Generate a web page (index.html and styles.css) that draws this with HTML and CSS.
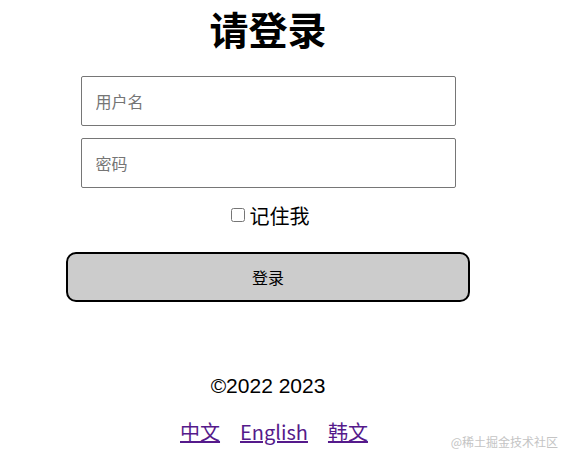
FILE: index.html
```html
<!DOCTYPE html>
<html lang="zh">

<head>
    <meta charset="UTF-8">
    <title>请登录</title>
    <link rel="stylesheet" href="styles.css">
</head>

<body>
    <div class="wrapper">
        <h1 class="title">请登录</h1>

        <form class="login-form">
            <input class="field" type="text" placeholder="用户名">
            <input class="field" type="password" placeholder="密码">
            <label class="remember"><input type="checkbox" class="check">记住我</label>
            <button type="button" class="submit">登录</button>
        </form>

        <div class="copyright">©2022 2023</div>

        <div class="langs">
            <a href="#">中文</a>
            <a href="#">English</a>
            <a href="#">韩文</a>
        </div>
    </div>

    <div class="watermark">@稀土掘金技术社区</div>
</body>

</html>
```

FILE: styles.css
```css
body {
    margin: 0;
    font-family: "Noto Sans CJK SC", "Liberation Sans", sans-serif;
    color: #000;
    background: #fff;
}

.wrapper {
    width: 404px;
    margin-left: 66px;
}

.title {
    margin: 0;
    font-size: 39px;
    line-height: normal;
    font-weight: 700;
    text-align: center;
}

.login-form {
    display: flex;
    flex-direction: column;
    align-items: center;
    margin-top: 20px;
}

.field {
    box-sizing: border-box;
    width: 375px;
    height: 50px;
    margin-bottom: 12px;
    padding: 0 14px;
    border: 1px solid #767676;
    border-radius: 2px;
    font-family: inherit;
    font-size: 16px;
}

.field::placeholder {
    color: #757575;
}

.remember {
    display: flex;
    align-items: center;
    height: 30px;
    margin-left: 4px;
    font-size: 20px;
}

.check {
    width: 14px;
    height: 14px;
    margin: 0 5px 0 0;
}

.submit {
    box-sizing: border-box;
    width: 404px;
    height: 50px;
    margin-top: 22px;
    border: 2px solid #000;
    border-radius: 10px;
    background-color: #ccc;
    font-family: inherit;
    font-size: 16px;
    color: #000;
}

.copyright {
    margin-top: 69px;
    line-height: 30px;
    font-family: "Liberation Sans", "Noto Sans CJK SC", sans-serif;
    font-size: 21px;
    text-align: center;
}

.langs {
    display: flex;
    justify-content: center;
    gap: 20px;
    margin-top: 16px;
    padding-left: 12px;
    line-height: 30px;
    font-size: 20px;
}

.langs a {
    color: #551a8b;
}

.watermark {
    position: absolute;
    right: 4px;
    bottom: 4px;
    font-size: 12px;
    color: #c4c4c4;
}
```
